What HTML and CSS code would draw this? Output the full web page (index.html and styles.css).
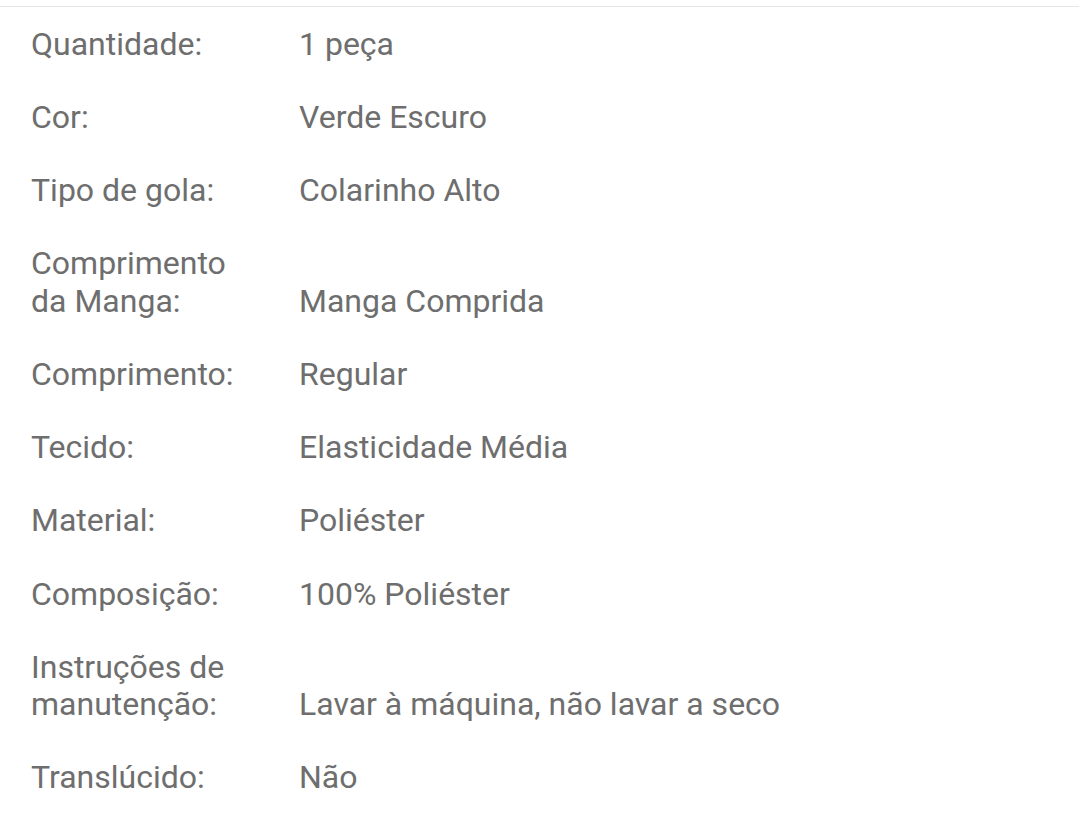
FILE: index.html
```html
<!DOCTYPE html>
<html lang="pt">
<head>
<meta charset="utf-8">
<title>Especificações</title>
<link rel="stylesheet" href="styles.css">
</head>
<body>
<div class="specs">
  <div class="row"><div class="label">Quantidade:</div><div class="value">1 peça</div></div>
  <div class="row"><div class="label">Cor:</div><div class="value">Verde Escuro</div></div>
  <div class="row"><div class="label">Tipo de gola:</div><div class="value">Colarinho Alto</div></div>
  <div class="row"><div class="label">Comprimento da Manga:</div><div class="value">Manga Comprida</div></div>
  <div class="row"><div class="label">Comprimento:</div><div class="value">Regular</div></div>
  <div class="row"><div class="label">Tecido:</div><div class="value">Elasticidade Média</div></div>
  <div class="row"><div class="label">Material:</div><div class="value">Poliéster</div></div>
  <div class="row"><div class="label">Composição:</div><div class="value">100% Poliéster</div></div>
  <div class="row"><div class="label">Instruções de manutenção:</div><div class="value">Lavar à máquina, não lavar a seco</div></div>
  <div class="row"><div class="label">Translúcido:</div><div class="value">Não</div></div>
</div>
</body>
</html>
```
FILE: styles.css
```css
html, body {
  margin: 0;
  padding: 0;
  background: #ffffff;
}
body {
  font-family: Roboto, "Noto Sans", sans-serif;
  color: #6e6e6e;
}
.specs {
  margin-top: 6px;
  border-top: 1px solid #e6e6e6;
  padding-left: 31px;
  padding-top: 1px;
}
.row {
  display: flex;
  align-items: flex-end;
  gap: 38px;
  padding: 17.9px 0;
  font-size: 32px;
  line-height: 37.4px;
}
.label {
  width: 230px;
  flex: 0 0 230px;
}
.value {
  flex: 1 1 auto;
}
```
